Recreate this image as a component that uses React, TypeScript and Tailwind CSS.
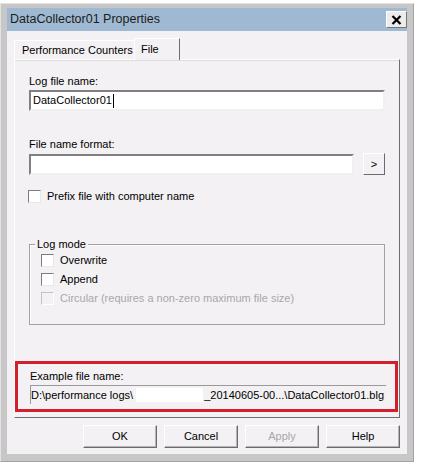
import React from 'react';

const FONT = { fontFamily: '"Liberation Sans", Arial, sans-serif' };

function CheckBox({ label, disabled }: { label: string; disabled?: boolean }) {
  return (
    <div className="flex items-center h-[19px]">
      <span
        className={`w-[13px] h-[13px] border-t border-l border-b border-r ${
          disabled
            ? 'border-t-[#c4c2c4] border-l-[#c4c2c4] border-b-white border-r-white bg-[#f3f1f3]'
            : 'border-t-[#7c7c7c] border-l-[#7c7c7c] border-b-[#e8e8e8] border-r-[#e8e8e8] bg-white'
        }`}
      />
      <span className={`ml-[6px] text-[11px] ${disabled ? 'text-[#a9a7a9]' : 'text-black'}`}>{label}</span>
    </div>
  );
}

function DlgButton({ label, disabled }: { label: string; disabled?: boolean }) {
  return (
    <div
      className={`w-[74px] h-[23px] flex items-center justify-center text-[11px] border border-t-white border-l-white border-b-[#6b6b6b] border-r-[#6b6b6b] bg-[#f3f1f3] shadow-[inset_-1px_-1px_0_#b5b5b5] ${
        disabled ? 'text-[#a9a7a9]' : 'text-black'
      }`}
    >
      {label}
    </div>
  );
}

export default function App() {
  return (
    <div className="w-[423px] h-[473px] bg-white" style={FONT}>
      <div className="mt-[3px] w-[414px] h-[459px] bg-[#c7c7c7] border border-[#a3a3a3] border-t-[#e2e2e2] border-l-[#e2e2e2] pt-[4px] px-[6px] pb-[7px] flex flex-col">
        {/* title bar */}
        <div className="h-[23px] bg-[#9fb9d3] flex items-center justify-between pl-[3px] pr-[0px]">
          <span className="text-[12.5px] text-[#1c1c1c]">DataCollector01 Properties</span>
          <div className="w-[21px] h-[17px] bg-[#ececec] border border-t-white border-l-white border-b-[#777] border-r-[#777] flex items-center justify-center">
            <svg width="11" height="10" viewBox="0 0 11 10">
              <path d="M1.5 1 L9.5 9 M9.5 1 L1.5 9" stroke="#000" strokeWidth="2.2" />
            </svg>
          </div>
        </div>

        {/* client */}
        <div className="flex-1 bg-[#f3f1f3] pl-[7px] pr-[5px] pt-[6px] flex flex-col">
          {/* tabs */}
          <div className="flex items-end h-[22px]">
            <div className="h-[19px] w-[120px] pl-[7px] flex items-center whitespace-nowrap text-[11px] border-t border-l border-t-white border-l-white bg-[#f3f1f3]">
              Performance Counters
            </div>
            <div className="h-[22px] w-[46px] px-[6px] flex items-start pt-[2px] text-[11px] border-t border-l border-r border-t-white border-l-white border-r-[#6e6e6e] bg-[#f3f1f3] -mb-px relative z-10">
              File
            </div>
          </div>

          {/* panel */}
          <div className="h-[359px] w-[386px] border border-t-white border-l-white border-b-[#6e6e6e] border-r-[#6e6e6e] shadow-[inset_0_1px_0_#dcdcdc] flex flex-col">
            <div className="pl-[14px] pr-[13px] pt-[13px] flex flex-col">
              <div className="text-[11px] h-[16px] leading-[16px]">Log file name:</div>
              <div className="mt-[1px] h-[21px] w-[356px] bg-white border-2 border-t-[#808080] border-l-[#808080] border-b-[#f0f0f0] border-r-[#f0f0f0] flex items-center pl-[2px] text-[11px]">
                DataCollector01
                <span className="inline-block w-px h-[14px] bg-black ml-px" />
              </div>

              <div className="mt-[25px] text-[11px] h-[16px] leading-[16px]">File name format:</div>
              <div className="mt-[1px] flex items-center">
                <div className="h-[21px] w-[325px] bg-white border-2 border-t-[#808080] border-l-[#808080] border-b-[#f0f0f0] border-r-[#f0f0f0]" />
                <div className="ml-[9px] w-[22px] h-[22px] border border-t-white border-l-white border-b-[#6b6b6b] border-r-[#6b6b6b] flex items-center justify-center text-[11px] bg-[#f3f1f3]">
                  &gt;
                </div>
              </div>

              <div className="mt-[12px] -ml-px">
                <CheckBox label="Prefix file with computer name" />
              </div>

              {/* group box */}
              <div className="mt-[38px] relative h-[81px] w-[356px] border border-[#a3a1a3] shadow-[inset_1px_1px_0_#ffffff]">
                <span className="absolute -top-[9px] left-[5px] px-[2px] bg-[#f3f1f3] text-[11px] leading-[16px]">Log mode</span>
                <div className="pl-[11px] pt-[6px] flex flex-col">
                  <CheckBox label="Overwrite" />
                  <CheckBox label="Append" />
                  <CheckBox label="Circular (requires a non-zero maximum file size)" disabled />
                </div>
              </div>
            </div>

            {/* highlighted example */}
            <div className="mt-[36px] w-[383px] h-[51px] border-[3px] border-[#d21f2b] pl-[12px] pt-[4px] flex flex-col">
              <div className="text-[11px] h-[16px] leading-[16px]">Example file name:</div>
              <div className="mt-[1px] h-[19px] w-[356px] border-t border-l border-t-[#9a9a9a] border-l-[#9a9a9a] flex items-center text-[11px] whitespace-nowrap pr-[2px]">
                <span>D:\performance logs\</span>
                <span className="ml-[3px] flex-1 h-[14px] bg-white" />
                <span className="ml-[1px]">_20140605-00...\DataCollector01.blg</span>
              </div>
            </div>
          </div>

          {/* buttons */}
          <div className="mt-[7px] w-[386px] flex justify-end gap-[7px]">
            <DlgButton label="OK" />
            <DlgButton label="Cancel" />
            <DlgButton label="Apply" disabled />
            <DlgButton label="Help" />
          </div>
        </div>
      </div>
    </div>
  );
}
